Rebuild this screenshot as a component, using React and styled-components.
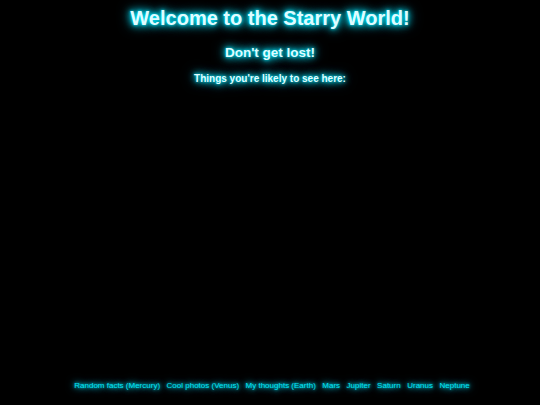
import styled, { createGlobalStyle } from "styled-components";

const GlobalStyle = createGlobalStyle`
  html, body {
    margin: 0;
    padding: 0;
    background: #000;
  }
  body {
    font-family: "Liberation Sans", Arial, sans-serif;
  }
`;

const glow = "0 0 3px #00eaff, 0 0 6px #00e0f8, 0 0 10px #00c8e0, 0 0 14px #00a8c0";

const Page = styled.div`
  min-height: 100vh;
  display: flex;
  flex-direction: column;
  align-items: center;
  color: #dffcff;
  box-sizing: border-box;
  padding: 7px 0 15px;
`;

const Title = styled.h1`
  margin: 0;
  font-size: 20px;
  font-weight: bold;
  text-shadow: ${glow};
`;

const Subtitle = styled.h2`
  margin: 15px 0 0;
  font-size: 13.5px;
  text-shadow: ${glow};
`;

const Lead = styled.h3`
  margin: 13px 0 0;
  font-size: 10px;
  text-shadow: ${glow};
`;

const Nav = styled.nav`
  margin-top: auto;
  margin-left: 4px;
  display: flex;
  gap: 6.5px;
`;

const NavLink = styled.a`
  font-size: 8px;
  color: #00e4f4;
  text-decoration: none;
  text-shadow: 0 0 3px #00e5ff, 0 0 6px #00d0e8, 0 0 10px #00a8c0;
`;

const links = [
  "Random facts (Mercury)",
  "Cool photos (Venus)",
  "My thoughts (Earth)",
  "Mars",
  "Jupiter",
  "Saturn",
  "Uranus",
  "Neptune",
];

export default function App() {
  return (
    <>
      <GlobalStyle />
      <Page>
        <Title>Welcome to the Starry World!</Title>
        <Subtitle>Don't get lost!</Subtitle>
        <Lead>Things you're likely to see here:</Lead>
        <Nav>
          {links.map((l) => (
            <NavLink key={l} href="#">
              {l}
            </NavLink>
          ))}
        </Nav>
      </Page>
    </>
  );
}
